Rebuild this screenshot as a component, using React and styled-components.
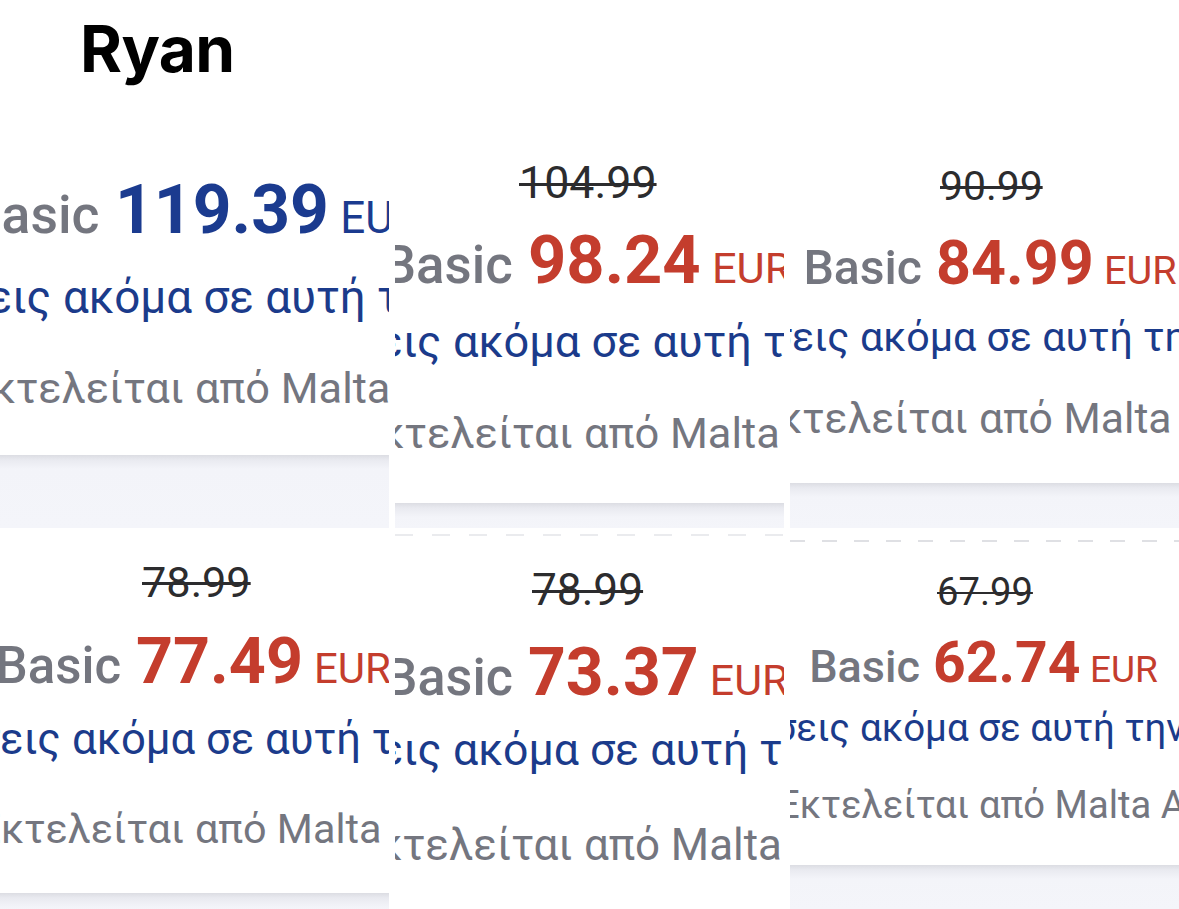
import React from 'react';
import styled, { createGlobalStyle } from 'styled-components';

const GlobalStyle = createGlobalStyle`
  html, body {
    margin: 0;
    padding: 0;
    background: #ffffff;
  }
  body {
    font-family: Roboto, 'Noto Sans', sans-serif;
  }
`;

const LEAD = 600;

const Page = styled.main`
  position: relative;
  width: 1179px;
  height: 909px;
  display: grid;
  grid-template-columns: repeat(3, 389px);
  grid-template-rows: 528px 381px;
  column-gap: 6px;
  overflow: hidden;
  background: #ffffff;
`;

const Title = styled.h1`
  position: absolute;
  top: 17px;
  left: 80px;
  z-index: 2;
  margin: 0;
  font-family: Inter, 'Liberation Sans', sans-serif;
  font-weight: 700;
  font-size: 64px;
  line-height: 1;
  letter-spacing: -0.6px;
  color: #000000;
`;

const Tile = styled.section`
  display: flex;
  flex-direction: column;
  overflow: hidden;
  background: #ffffff;
  font-size: ${({ $price }) => $price}px;
`;

const Card = styled.div`
  display: flex;
  flex-direction: column;
  flex: ${({ $height }) => ($height ? `0 0 ${$height}px` : '1 1 auto')};
  background: #ffffff;
`;

const Base = styled.div`
  flex: 1 1 auto;
  background: linear-gradient(to bottom, #dcdde3 0px, #e9eaf0 5px, #f3f4f9 14px, #f4f5fa 100%);
`;

const Dashes = styled.div`
  flex: none;
  height: 2px;
  margin-top: ${({ $mt }) => $mt}px;
  background: repeating-linear-gradient(
    to right,
    ${({ $tone }) => $tone} 0 ${({ $dash }) => $dash}px,
    transparent ${({ $dash }) => $dash}px ${({ $period }) => $period}px
  );
`;

const Line = styled.div`
  flex: none;
  height: ${({ $h }) => $h}px;
  line-height: ${({ $h }) => $h}px;
  margin-top: ${({ $mt }) => $mt}px;
  margin-left: ${({ $x }) => $x - LEAD}px;
  white-space: nowrap;
`;

const Lead = styled.span`
  display: inline-flex;
  justify-content: flex-end;
  width: ${LEAD}px;
  vertical-align: baseline;
`;

const Plan = styled.span`
  font-size: 0.79em;
  font-weight: 500;
  color: #74767f;
  margin-right: 0.29em;
`;

const Amount = styled.span`
  font-weight: 700;
  color: ${({ $tone }) => $tone};
`;

const Currency = styled.span`
  font-size: 0.65em;
  font-weight: 400;
  margin-left: 0.26em;
  color: ${({ $tone }) => $tone};
`;

const OldPrice = styled.span`
  font-size: 0.67em;
  font-weight: 400;
  color: #2c2c2e;
  text-decoration: line-through;
  text-decoration-thickness: 0.065em;
`;

const Seats = styled.span`
  font-size: 0.675em;
  color: #1b3b8b;
`;

const Operator = styled.span`
  font-size: ${({ $size }) => $size}em;
  color: #74767f;
`;

const Space = styled.span`
  display: inline-block;
  width: 0.26em;
`;

const BLUE = '#1b3b8f';
const RED = '#c43d2d';

// rows: [baseline from tile top, x of anchor from tile left]
const tiles = [
  { price: 67.7, card: 455, amount: '119.39', tone: BLUE, op: 0.64,
    rows: { price: [233, 115], seats: [313, 63], operator: [403, 195] } },
  { price: 66.8, card: 503, amount: '98.24', tone: RED, old: '104.99', op: 0.65,
    rows: { old: [198, 124], price: [283, 133], seats: [357, 58], operator: [448, 189] } },
  { price: 61, card: 483, amount: '84.99', tone: RED, old: '90.99', op: 0.7,
    rows: { old: [199.5, 150], price: [283.7, 146], seats: [350.5, 70], operator: [433, 189] } },
  { price: 64.6, card: 365, amount: '77.49', tone: RED, old: '78.99', op: 0.64,
    rows: { old: [69.4, 142], price: [154.9, 136], seats: [226, 72], operator: [315.5, 195] } },
  { price: 66, card: null, amount: '73.37', tone: RED, old: '78.99', op: 0.665,
    dash: { at: 7, tone: '#eaebee', dash: 18, period: 37 },
    rows: { old: [77.7, 137], price: [167.4, 133], seats: [238, 58], operator: [332.5, 189] } },
  { price: 57, card: 337, amount: '62.74', tone: RED, old: '67.99', op: 0.67,
    dash: { at: 13, tone: '#dfe0e4', dash: 15, period: 32 },
    rows: { old: [77.6, 147], price: [154.2, 143], seats: [213.5, 70], operator: [290, 189] } },
];

const HEIGHTS = { old: 50, price: 80, seats: 60, operator: 60 };
const ORDER = ['old', 'price', 'seats', 'operator'];

const FareTile = ({ t }) => {
  let bottom = 0;
  const items = [];

  if (t.dash) {
    items.push(
      <Dashes
        key="dash"
        $mt={t.dash.at - 1}
        $tone={t.dash.tone}
        $dash={t.dash.dash}
        $period={t.dash.period}
      />
    );
    bottom = t.dash.at + 1;
  }

  ORDER.forEach((key) => {
    const row = t.rows[key];
    if (!row) return;
    const [baseline, x] = row;
    const h = HEIGHTS[key];
    const center = baseline - 0.342 * t.price;
    const mt = center - h / 2 - bottom;
    bottom = center + h / 2;

    let content = null;
    if (key === 'old') {
      content = (<><Lead /><OldPrice>{t.old}</OldPrice></>);
    } else if (key === 'price') {
      content = (
        <>
          <Lead><Plan>Basic</Plan></Lead>
          <Amount $tone={t.tone}>{t.amount}</Amount>
          <Currency $tone={t.tone}>EUR</Currency>
        </>
      );
    } else if (key === 'seats') {
      content = (
        <>
          <Lead><Seats>Απομένουν 3 θέσεις<Space /></Seats></Lead>
          <Seats>ακόμα σε αυτή την τιμή</Seats>
        </>
      );
    } else {
      content = (
        <>
          <Lead><Operator $size={t.op}>Εκτελείται<Space /></Operator></Lead>
          <Operator $size={t.op}>από Malta Air</Operator>
        </>
      );
    }

    items.push(
      <Line key={key} $h={h} $mt={mt} $x={x}>{content}</Line>
    );
  });

  return (
    <Tile $price={t.price}>
      <Card $height={t.card}>{items}</Card>
      {t.card ? <Base /> : null}
    </Tile>
  );
};

export default function App() {
  return (
    <>
      <GlobalStyle />
      <Page>
        <Title>Ryan</Title>
        {tiles.map((t, i) => (
          <FareTile key={i} t={t} />
        ))}
      </Page>
    </>
  );
}
